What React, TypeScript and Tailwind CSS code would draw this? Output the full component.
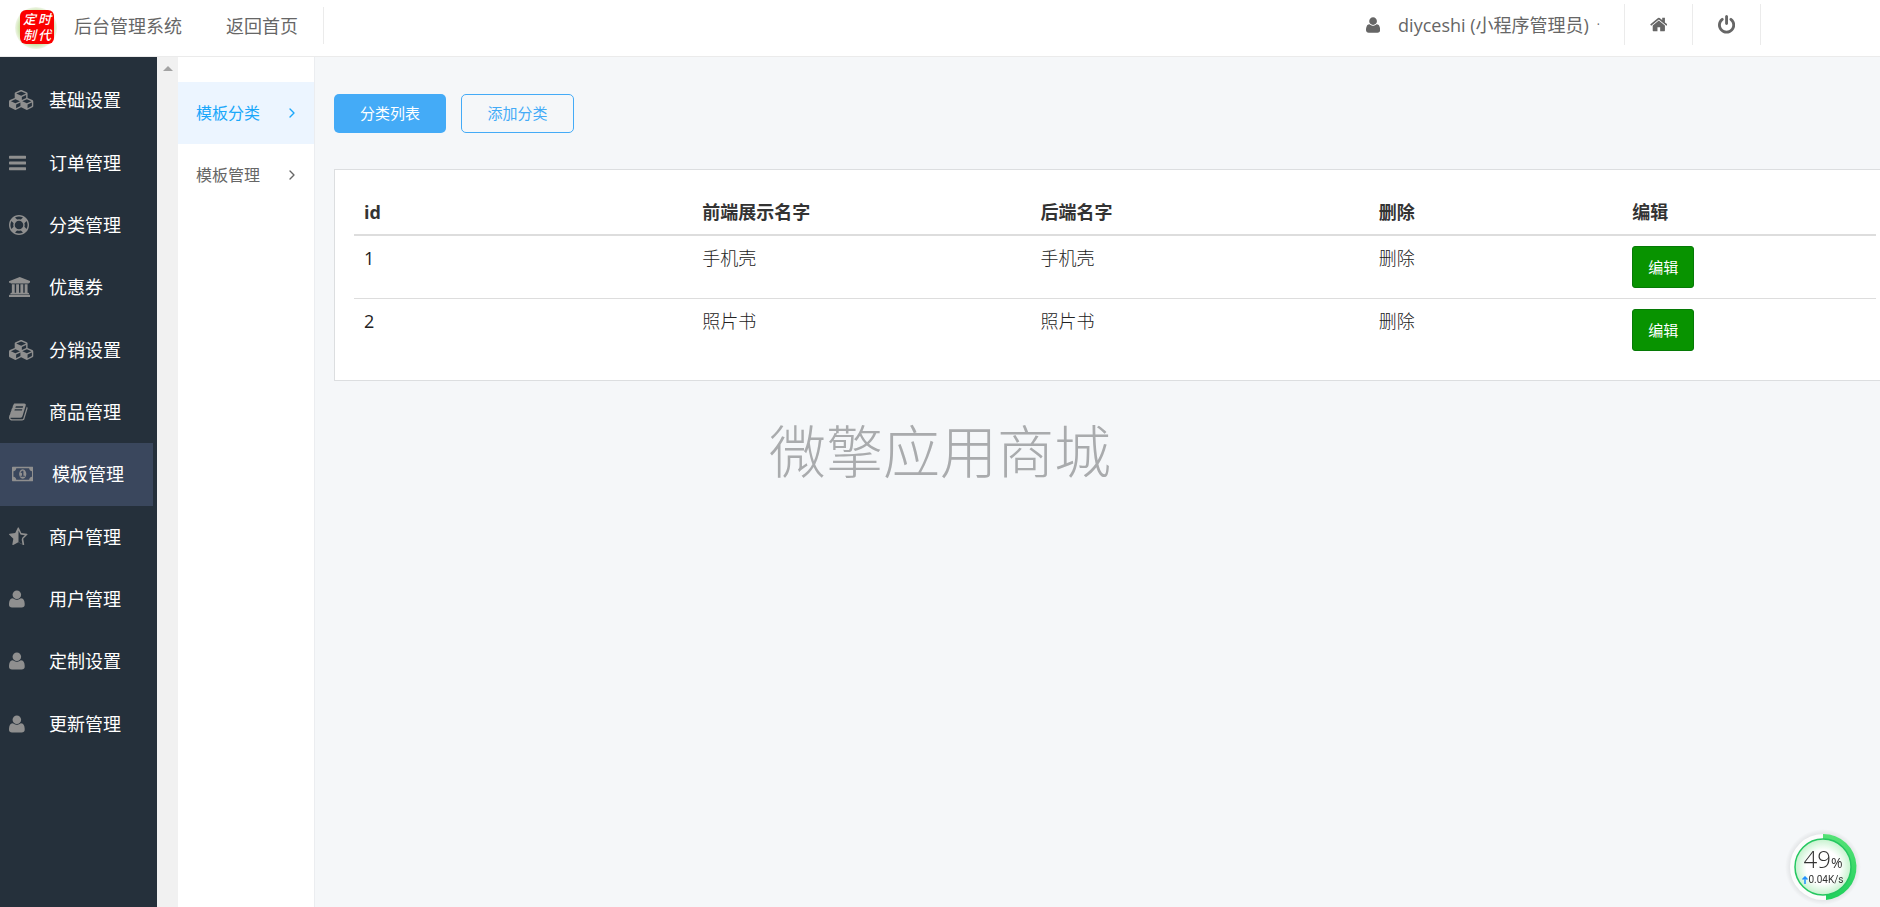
import { ChevronRight } from "lucide-react";

type IconShape = { box: string; d: string };

const icons = {
  cubes: {
    box: "0 0 2304 1792",
    d: "M640 1632l384-192v-314l-384 164v342zm-64-454l404-173-404-173-404 173zm1088 454l384-192v-314l-384 164v342zm-64-454l404-173-404-173-404 173zm-448-293l384-165v-266l-384 164v267zm-64-379l441-189-441-189-441 189zm1088 518v416q0 36-19 67t-52 47l-448 224q-25 14-57 14t-57-14l-448-224q-4-2-7-4-2 2-7 4l-448 224q-25 14-57 14t-57-14l-448-224q-33-16-52-47t-19-67v-416q0-38 21.5-70t56.5-48l434-186v-400q0-38 21.5-70t56.5-48l448-192q23-10 50-10t50 10l448 192q35 16 56.5 48t21.5 70v400l434 186q36 16 57 48t21 70z",
  },
  bars: {
    box: "128 0 1536 1792",
    d: "M1664 1344v128q0 26-19 45t-45 19h-1408q-26 0-45-19t-19-45v-128q0-26 19-45t45-19h1408q26 0 45 19t19 45zm0-512v128q0 26-19 45t-45 19h-1408q-26 0-45-19t-19-45v-128q0-26 19-45t45-19h1408q26 0 45 19t19 45zm0-512v128q0 26-19 45t-45 19h-1408q-26 0-45-19t-19-45v-128q0-26 19-45t45-19h1408q26 0 45 19t19 45z",
  },
  ring: {
    box: "0 0 1792 1792",
    d: "M896 0q182 0 348 71t286 191 191 286 71 348-71 348-191 286-286 191-348 71-348-71-286-191-191-286-71-348 71-348 191-286 286-191 348-71zm0 128q-190 0-361 90l194 194q82-28 167-28t167 28l194-194q-171-90-361-90zm-678 1129l194-194q-28-82-28-167t28-167l-194-194q-90 171-90 361t90 361zm678 407q190 0 361-90l-194-194q-82 28-167 28t-167-28l-194 194q171 90 361 90zm0-384q159 0 271.5-112.5t112.5-271.5-112.5-271.5-271.5-112.5-271.5 112.5-112.5 271.5 112.5 271.5 271.5 112.5zm484-217l194 194q90-171 90-361t-90-361l-194 194q28 82 28 167t-28 167z",
  },
  bank: {
    box: "0 0 1920 1792",
    d: "M960 0l960 384v128h-128q0 26-20.5 45t-48.5 19h-1526q-28 0-48.5-19t-20.5-45h-128v-128zm-704 640h256v768h128v-768h256v768h128v-768h256v768h128v-768h256v768h59q28 0 48.5 19t20.5 45v64h-1664v-64q0-26 20.5-45t48.5-19h59v-768zm1595 960q28 0 48.5 19t20.5 45v128h-1920v-128q0-26 20.5-45t48.5-19h1782z",
  },
  book: {
    box: "64 0 1664 1792",
    d: "M1703 478q40 57 18 129l-275 906q-19 64-76.5 107.5t-122.5 43.5h-923q-77 0-148.5-53.5t-99.5-131.5q-24-67-2-127 0-4 3-27t4-37q1-8-3-21.5t-3-19.5q2-11 8-21t16.5-23.5 16.5-23.5q23-38 45-91.5t30-91.5q3-10 .5-30t-.5-28q3-11 17-28t17-23q21-36 42-92t25-90q1-9-2.5-32t.5-28q4-13 22-30.5t22-22.5q19-26 42.5-84.5t27.5-96.5q1-8-3-25.5t-2-26.5q2-8 9-18t18-23 17-21q8-12 16.5-30.5t15-35 16-36 19.5-32 26.5-23.5 36-11.5 47.5 5.5l-1 3q38-9 51-9h761q74 0 114 56t18 130l-274 906q-36 119-71.5 153.5t-128.5 34.5h-869q-27 0-38 15-11 16-1 43 24 70 144 70h923q29 0 56-15.5t35-41.5l300-987q7-22 5-57 38 15 59 43zm-1064 2q-4 13 2 22.5t20 9.5h608q13 0 25.5-9.5t16.5-22.5l21-64q4-13-2-22.5t-20-9.5h-608q-13 0-25.5 9.5t-16.5 22.5zm-83 256q-4 13 2 22.5t20 9.5h608q13 0 25.5-9.5t16.5-22.5l21-64q4-13-2-22.5t-20-9.5h-608q-13 0-25.5 9.5t-16.5 22.5z",
  },
  money: {
    box: "0 0 1920 1792",
    d: "M768 1152h384v-96h-128v-448h-114l-148 137 77 80q42-37 55-57h2v288h-128v96zm512-256q0 70-21 142t-59.5 134-101.5 101-138 39-138-39-101.5-101-59.5-134-21-142 21-142 59.5-134 101.5-101 138-39 138 39 101.5 101 59.5 134 21 142zm512 256v-512q-106 0-181-75t-75-181h-1152q0 106-75 181t-181 75v512q106 0 181 75t75 181h1152q0-106 75-181t181-75zm128-832v1152q0 26-19 45t-45 19h-1792q-26 0-45-19t-19-45v-1152q0-26 19-45t45-19h1792q26 0 45 19t19 45z",
  },
  star: {
    box: "64 0 1664 1792",
    d: "M1250 957l238-225-329-48-66-10-30-60-147-298v1041l59 31 294 155-56-328-11-66zm452-262l-363 354 86 500q5 33-6 51.5t-34 18.5q-17 0-40-12l-449-236-449 236q-23 12-40 12-23 0-34-18.5t-6-51.5l86-500-364-354q-32-32-23-59.5t54-34.5l502-73 225-455q20-41 49-41 28 0 49 41l225 455 502 73q45 7 54 34.5t-24 59.5z",
  },
  user: {
    box: "192 0 1408 1792",
    d: "M1600 1405q0 120-73 189.5t-194 69.5h-874q-121 0-194-69.5t-73-189.5q0-53 3.5-103.5t14-109 26.5-108.5 43-97.5 62-81 85.5-53.5 111.5-20q9 0 42 21.5t74.5 48 108 48 133.5 21.5 133.5-21.5 108-48 74.5-48 42-21.5q61 0 111.5 20t85.5 53.5 62 81 43 97.5 26.5 108.5 14 109 3.5 103.5zm-320-893q0 159-112.5 271.5t-271.5 112.5-271.5-112.5-112.5-271.5 112.5-271.5 271.5-112.5 271.5 112.5 112.5 271.5z",
  },
  home: {
    box: "64 0 1664 1792",
    d: "M1472 992v480q0 26-19 45t-45 19h-384v-384h-256v384h-384q-26 0-45-19t-19-45v-480q0-1 .5-3t.5-3l575-474 575 474q1 2 1 6zm223-69l-62 74q-8 9-21 11h-3q-13 0-21-7l-692-577-692 577q-12 8-24 7-13-2-21-11l-62-74q-8-10-7-23.5t11-21.5l719-599q32-26 76-26t76 26l244 204v-195q0-14 9-23t23-9h192q14 0 23 9t9 23v408l219 182q10 8 11 21.5t-7 23.5z",
  },
  power: {
    box: "128 0 1536 1792",
    d: "M1664 896q0 156-61 298t-164 245-245 164-298 61-298-61-245-164-164-245-61-298q0-182 80.5-343t226.5-270q43-32 95.5-25t83.5 50q32 42 24.5 94.5t-49.5 84.5q-98 74-151.5 181t-53.5 228q0 104 40.5 198.5t109.5 163.5 163.5 109.5 198.5 40.5 198.5-40.5 163.5-109.5 109.5-163.5 40.5-198.5q0-121-53.5-228t-151.5-181q-42-32-49.5-84.5t24.5-94.5q31-43 84-50t95 25q146 109 226.5 270t80.5 343zm-640-768v640q0 52-38 90t-90 38-90-38-38-90v-640q0-52 38-90t90-38 90 38 38 90z",
  },
} satisfies Record<string, IconShape>;

type IconName = keyof typeof icons;

const menu: { icon: IconName; label: string; active?: boolean }[] = [
  { icon: "cubes", label: "基础设置" },
  { icon: "bars", label: "订单管理" },
  { icon: "ring", label: "分类管理" },
  { icon: "bank", label: "优惠券" },
  { icon: "cubes", label: "分销设置" },
  { icon: "book", label: "商品管理" },
  { icon: "money", label: "模板管理", active: true },
  { icon: "star", label: "商户管理" },
  { icon: "user", label: "用户管理" },
  { icon: "user", label: "定制设置" },
  { icon: "user", label: "更新管理" },
];

const rows = [
  { id: 1, front: "手机壳", back: "手机壳" },
  { id: 2, front: "照片书", back: "照片书" },
];

function Icon({ name, className }: { name: IconName; className: string }) {
  return (
    <svg viewBox={icons[name].box} className={className} fill="currentColor" aria-hidden="true">
      <path d={icons[name].d} />
    </svg>
  );
}

function Logo() {
  return (
    <svg width="44" height="44" viewBox="0 0 44 44" aria-hidden="true">
      <defs>
        <radialGradient id="leaf">
          <stop offset="0.7" stopColor="#b9dc8c" />
          <stop offset="1" stopColor="#f1f6ea" />
        </radialGradient>
      </defs>
      <circle cx="22" cy="22" r="21" fill="url(#leaf)" />
      <rect x="6" y="4" width="34" height="34" rx="6" fill="#fb0000" />
      <g fill="#fff" fontSize="13" fontStyle="italic" fontWeight="500">
        <text x="9" y="18">定</text>
        <text x="24" y="18">时</text>
        <text x="9" y="34">制</text>
        <text x="24" y="34">代</text>
      </g>
    </svg>
  );
}

function Header() {
  return (
    <header className="flex h-[57px] shrink-0 items-start justify-between border-b border-[#ebebeb] bg-white text-lg text-[#666]">
      <div className="flex items-start pl-3.5">
        <div className="pt-1.5">
          <Logo />
        </div>
        <h1 className="pt-3 pl-4 leading-7">后台管理系统</h1>
        <a href="#" className="mt-[7px] ml-[19px] h-[37px] border-r border-[#ebebeb] px-[25px] pt-[5px] leading-7">
          返回首页
        </a>
      </div>

      <div className="mt-1 mr-[119px] flex h-[41px]">
        <a href="#" className="flex items-center border-r border-[#ebebeb] pr-6">
          <Icon name="user" className="mr-[18px] h-[18px]" />
          diyceshi (小程序管理员)
          <span className="ml-2 text-xs">·</span>
        </a>
        <a href="#" aria-label="首页" className="flex w-[68px] items-center justify-center border-r border-[#ebebeb]">
          <Icon name="home" className="h-[19px]" />
        </a>
        <a href="#" aria-label="退出" className="flex w-[68px] items-center justify-center border-r border-[#ebebeb]">
          <Icon name="power" className="h-5" />
        </a>
      </div>
    </header>
  );
}

function Sidebar() {
  return (
    <aside className="flex shrink-0 bg-[#25303b]">
      <nav className="mt-3 mr-1 grid h-[686px] w-[153px] auto-rows-fr text-lg text-white">
        {menu.map((item) => (
          <a
            key={item.label}
            href="#"
            className={
              item.active
                ? "flex items-center bg-[#3a475d] pl-3"
                : "flex items-center pl-[9px]"
            }
          >
            <span className="flex w-10 text-[#8f8f8f]">
              <Icon name={item.icon} className="h-5" />
            </span>
            {item.label}
          </a>
        ))}
      </nav>
      {/* scroll track */}
      <div className="flex w-[21px] justify-center bg-[#f1f1f1] pt-[9px]">
        <svg width="10" height="5" viewBox="0 0 10 5" fill="#a3a3a3" aria-hidden="true">
          <path d="M5 0l5 5H0z" />
        </svg>
      </div>
    </aside>
  );
}

function SubMenu() {
  return (
    <nav className="w-[137px] shrink-0 border-r border-[#ebedf0] bg-white pt-[25px] text-base">
      <a href="#" className="flex h-[62px] items-center justify-between bg-[#ecf5ff] pr-3.5 pl-[18px] text-[#1aa7fa]">
        模板分类
        <ChevronRight size={16} strokeWidth={2} />
      </a>
      <a href="#" className="flex h-[62px] items-center justify-between pr-3.5 pl-[18px] text-[#666]">
        模板管理
        <ChevronRight size={16} strokeWidth={2} />
      </a>
    </nav>
  );
}

function SpeedBall() {
  return (
    <div className="fixed right-[19px] bottom-0.5 h-[76px] w-[76px]">
      <svg viewBox="0 0 76 76" className="absolute inset-0" aria-hidden="true">
        <defs>
          <radialGradient id="halo">
            <stop offset="0.8" stopColor="#000" stopOpacity="0.1" />
            <stop offset="1" stopColor="#000" stopOpacity="0" />
          </radialGradient>
          <radialGradient id="face">
            <stop offset="0.6" stopColor="#fff" />
            <stop offset="1" stopColor="#c5f2cd" />
          </radialGradient>
          <linearGradient id="arc" x1="0" y1="0" x2="0" y2="1">
            <stop offset="0" stopColor="#56e277" />
            <stop offset="1" stopColor="#1fd05c" />
          </linearGradient>
        </defs>
        <circle cx="38" cy="38" r="38" fill="url(#halo)" />
        <circle cx="38" cy="38" r="33" fill="#fcfcfc" />
        <path d="M38 5a33 33 0 0 1 3 65.900V38h-3z" fill="url(#arc)" />
        <circle cx="38" cy="38" r="28" fill="url(#face)" stroke="#25c760" strokeWidth="1.500" />
      </svg>
      <div className="relative flex h-full flex-col items-center pt-4 text-[#333]">
        <div className="text-2xl leading-7 font-light">
          49<span className="text-sm font-normal">%</span>
        </div>
        <div className="flex items-center font-[Roboto,sans-serif] text-[10px] leading-[14px]">
          <svg width="6" height="8" viewBox="0 0 6 8" fill="none" stroke="#1e90ff" strokeWidth="1.500" aria-hidden="true">
            <path d="M3 8V1M.5 3.500L3 1l2.500 2.500" />
          </svg>
          0.04K/s
        </div>
      </div>
    </div>
  );
}

export default function App() {
  return (
    <div className="flex min-h-screen flex-col overflow-hidden bg-[#f5f7f9] font-['Open_Sans','Noto_Sans_CJK_SC',sans-serif]">
      <Header />
      <div className="flex flex-1">
        <Sidebar />
        <SubMenu />
        <main className="min-w-0 flex-1 pt-[37px] pl-[19px]">
          <div className="flex gap-[15px] text-[15px]">
            <button type="button" className="h-[39px] w-28 rounded-[5px] bg-[#44abf7] text-white">
              分类列表
            </button>
            <button type="button" className="h-[39px] w-[113px] rounded-[5px] border border-[#44abf7] text-[#44abf7]">
              添加分类
            </button>
          </div>

          {/* the card runs past the right edge of the window */}
          <section className="mt-9 -mr-4 border border-[#dcdee0] bg-white px-[19px] pt-5 pb-[19px]">
            <table className="w-full table-fixed text-left text-lg leading-6 text-[#333]">
              <thead>
                <tr className="border-b-2 border-[#dddddd]">
                  <th className="w-2/9 p-2.5 font-bold">id</th>
                  <th className="w-2/9 p-2.5 font-bold">前端展示名字</th>
                  <th className="w-2/9 p-2.5 font-bold">后端名字</th>
                  <th className="w-1/6 p-2.5 font-bold">删除</th>
                  <th className="w-1/6 p-2.5 font-bold">编辑</th>
                </tr>
              </thead>
              <tbody>
                {rows.map((row) => (
                  <tr key={row.id} className="border-b border-[#dddddd] align-top font-light text-[#222] last:border-b-0">
                    <td className="p-2.5 font-normal">{row.id}</td>
                    <td className="p-2.5">{row.front}</td>
                    <td className="p-2.5">{row.back}</td>
                    <td className="p-2.5">
                      <a href="#">删除</a>
                    </td>
                    <td className="p-2.5">
                      <button
                        type="button"
                        className="block h-[42px] w-[62px] rounded-[3px] border border-[#067a06] bg-[#089300] text-[15px] font-normal text-white"
                      >
                        编辑
                      </button>
                    </td>
                  </tr>
                ))}
              </tbody>
            </table>
          </section>
        </main>
      </div>

      <div className="pointer-events-none fixed inset-0 flex items-center justify-center pb-1 text-[57px] font-light text-[#a9abad]">
        微擎应用商城
      </div>
      <SpeedBall />
    </div>
  );
}
